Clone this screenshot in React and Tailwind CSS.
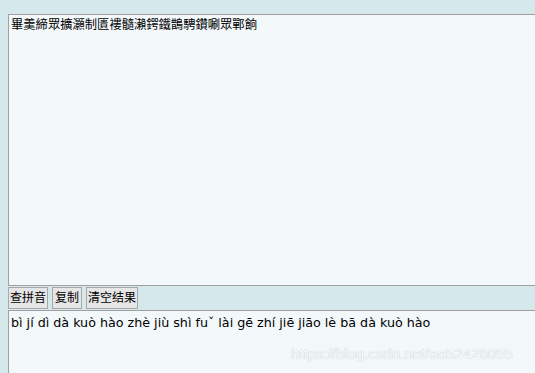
import React from 'react';

const App = () => {
    const garbled = '畢羹締眾擴灝制匱褸髓瀨鍔鐵鵲騁鑽唰眾鄲餉';
    const pinyin = 'bì jí dì dà kuò hào zhè jiù shì fuˇ lài gē zhí jiē jiāo lè bā dà kuò hào';

    return (
        <div className="relative h-[373px] w-[535px] overflow-hidden bg-[#d5e8eb] pl-[8px] pt-[14px] font-['Liberation_Sans','Noto_Sans_CJK_SC',sans-serif]">
            {/* Input area */}
            <div className="h-[272px] w-[560px] border border-[#a0a0a0] bg-[#f3f8fb] px-[2px] pt-[2px] text-[12.3px] leading-[17px] text-black">
                {garbled}
            </div>

            {/* Buttons */}
            <div className="flex h-[24px] items-center gap-[4px]">
                <button className="h-[22px] border border-[#a8a8a8] bg-[#e6e6e6] px-[1px] text-[12px] leading-[18px] text-black">查拼音</button>
                <button className="h-[22px] border border-[#a8a8a8] bg-[#e6e6e6] px-[2px] text-[12px] leading-[18px] text-black">复制</button>
                <button className="h-[22px] border border-[#a8a8a8] bg-[#e6e6e6] px-[1px] text-[12px] leading-[18px] text-black">清空结果</button>
            </div>

            {/* Result area */}
            <div className="h-[100px] w-[560px] border border-[#a0a0a0] bg-[#f3f8fb] px-[2px] pt-[3px] font-['DejaVu_Sans',sans-serif] text-[12.7px] leading-[17px] text-black">
                {pinyin}
            </div>

            <span className="absolute left-[291px] top-[343px] font-['Liberation_Sans',sans-serif] text-[15px] text-[#f8fafb] [text-shadow:0_0_1px_#aab5ba]">
                https://blog.csdn.net/ao52426055
            </span>
        </div>
    );
};

export default App;
